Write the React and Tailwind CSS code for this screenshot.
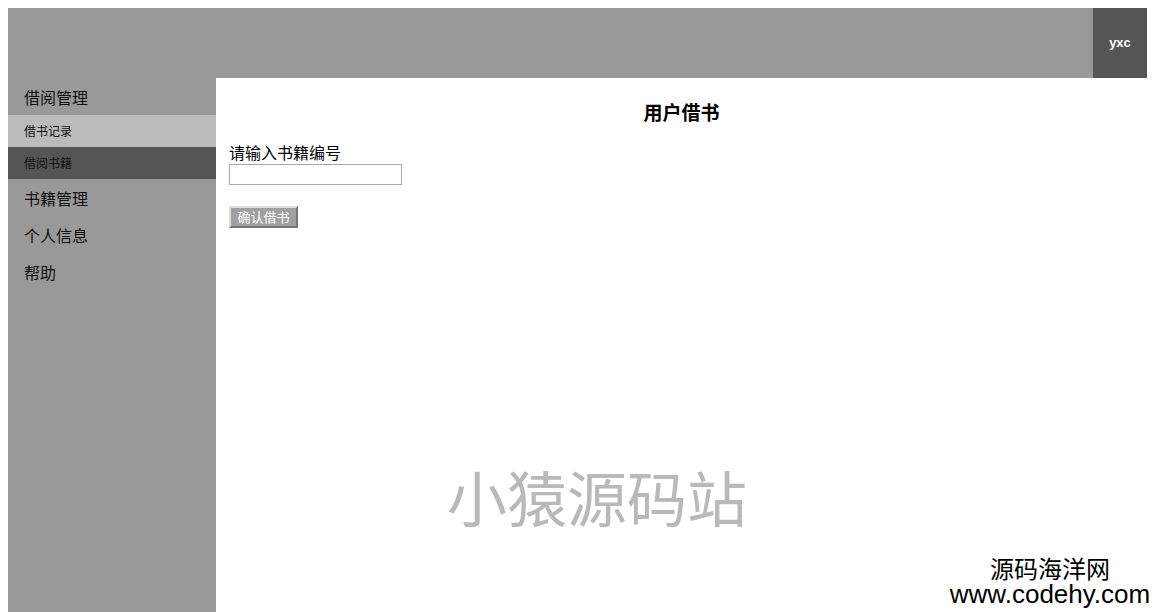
import React from "react";

const cjk = { fontFamily: '"Noto Sans CJK SC", "Liberation Sans", sans-serif' };

export default function App() {
  return (
    <div className="relative h-[612px] w-[1155px] overflow-hidden bg-white p-2" style={cjk}>
      <div className="flex h-[70px] justify-end bg-[#999]">
        <div className="flex w-[54px] items-center justify-center bg-[#555] text-[13px] font-bold text-white" style={{ fontFamily: '"Liberation Sans", Arial, sans-serif' }}>
          yxc
        </div>
      </div>
      <div className="flex h-[534px]">
        <div className="w-[208px] bg-[#999] text-[#111]">
          <div className="flex h-[37px] items-center pl-4 text-[16px]">借阅管理</div>
          <div className="flex h-[32px] items-center bg-[#bbb] pl-4 text-[12px]">借书记录</div>
          <div className="flex h-[32px] items-center bg-[#555] pl-4 text-[12px]">借阅书籍</div>
          <div className="flex h-[37px] items-center pl-4 text-[16px]">书籍管理</div>
          <div className="flex h-[37px] items-center pl-4 text-[16px]">个人信息</div>
          <div className="flex h-[37px] items-center pl-4 text-[16px]">帮助</div>
        </div>
        <div className="flex-1 bg-white pt-[21px] text-black">
          <div className="h-[26px] text-center text-[19px] font-bold leading-[26px]">用户借书</div>
          <div className="pl-[13px]">
            <div className="mt-[17px] h-[22px] text-[16px] leading-[20px]">请输入书籍编号</div>
            <input className="block h-[21px] w-[173px] border border-[#aaa] bg-white outline-none" />
            <button className="mt-[21px] block h-[22px] w-[69px] border-2 border-t-[#ddd] border-l-[#ddd] border-r-[#777] border-b-[#777] bg-[#a0a0a0] p-0 text-[13px] leading-[18px] text-white">
              确认借书
            </button>
          </div>
        </div>
      </div>
      <div className="absolute left-[447px] top-[466px] text-[60px] leading-none text-[#b9b9b9]">小猿源码站</div>
      <div className="absolute left-[940px] top-[555px] w-[220px] text-center text-black">
        <div className="text-[24px] leading-[26px]">源码海洋网</div>
        <div className="text-[26px] leading-[26px]" style={{ fontFamily: '"Liberation Sans", Arial, sans-serif' }}>www.codehy.com</div>
      </div>
    </div>
  );
}
